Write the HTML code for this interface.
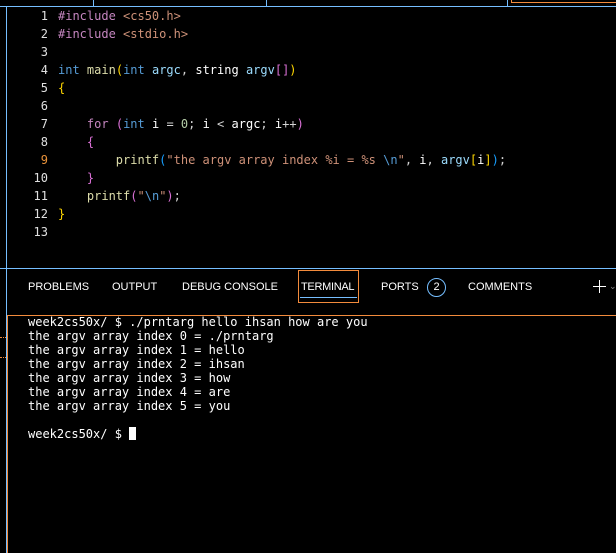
<!DOCTYPE html>
<html><head><meta charset="utf-8"><style>
html,body{margin:0;padding:0;background:#000;width:616px;height:553px;overflow:hidden;position:relative}
.abs{position:absolute}
.code{font-family:"DejaVu Sans Mono","Liberation Mono",monospace;font-size:12px;white-space:pre;color:#d4d4d4}
.ln{position:absolute;left:0;width:48px;text-align:right;color:#e0e0e0}
.cl{position:absolute;left:58px}
.k{color:#c586c0}.t{color:#569cd6}.s{color:#ce9178}.f{color:#dcdcaa}.v{color:#9cdcfe}.g{color:#ffd700}.p{color:#da70d6}.b{color:#179fff}.n{color:#b5cea8}.w{color:#fff}
.tab{position:absolute;top:281px;font-family:"Liberation Sans",sans-serif;font-size:11px;color:#fff}
.term{position:absolute;left:28px;top:315px;font-family:"DejaVu Sans Mono","Liberation Mono",monospace;font-size:12px;line-height:14px;color:#fff;white-space:pre}
</style></head><body>
<div class="abs" style="left:0;top:6px;width:616px;height:1px;background:#75beff"></div>
<div class="abs" style="left:93px;top:0;width:1px;height:6px;background:#75beff"></div>
<div class="abs" style="left:266px;top:0;width:1px;height:6px;background:#75beff"></div>
<div class="abs" style="left:507px;top:0;width:1px;height:6px;background:#75beff"></div>
<div class="abs" style="left:511px;top:0;width:105px;height:3px;border-left:1px solid #f38b3c;border-bottom:1px solid #f38b3c;box-sizing:border-box"></div>
<div class="abs" style="left:6px;top:6px;width:1px;height:547px;background:#75beff"></div>
<div class="abs" style="left:0;top:268px;width:616px;height:1px;background:#75beff"></div>
<div class="abs" style="left:7px;top:315px;width:609px;height:1px;background:#f38b3c"></div>
<div class="abs" style="left:7px;top:315px;width:1px;height:238px;background:#f38b3c"></div>
<div class="abs" style="left:0;top:337px;width:6px;height:21px;border-top:1px dotted #f38b3c;border-bottom:1px dotted #f38b3c;box-sizing:border-box"></div>

<div class="code">
<div class="ln" style="top:9px">1</div><div class="cl" style="top:9px"><span class="k">#include</span> <span class="s">&lt;cs50.h&gt;</span></div>
<div class="ln" style="top:27px">2</div><div class="cl" style="top:27px"><span class="k">#include</span> <span class="s">&lt;stdio.h&gt;</span></div>
<div class="ln" style="top:45px">3</div>
<div class="ln" style="top:63px">4</div><div class="cl" style="top:63px"><span class="t">int</span> <span class="f">main</span><span class="g">(</span><span class="t">int</span> <span class="v">argc</span>, <span class="w">string</span> <span class="v">argv</span><span class="p">[]</span><span class="g">)</span></div>
<div class="ln" style="top:81px">5</div><div class="cl" style="top:81px"><span class="g">{</span></div>
<div class="ln" style="top:99px">6</div>
<div class="ln" style="top:117px">7</div><div class="cl" style="top:117px">    <span class="k">for</span> <span class="p">(</span><span class="t">int</span> <span class="w">i</span> = <span class="n">0</span>; <span class="w">i</span> &lt; <span class="w">argc</span>; <span class="w">i</span>++<span class="p">)</span></div>
<div class="ln" style="top:135px">8</div><div class="cl" style="top:135px">    <span class="p">{</span></div>
<div class="ln" style="top:153px;color:#e8923a">9</div><div class="cl" style="top:153px">        <span class="f">printf</span><span class="b">(</span><span class="s">"the argv array index %i = %s </span><span class="t">\n</span><span class="s">"</span>, <span class="w">i</span>, <span class="v">argv</span><span class="g">[</span><span class="w">i</span><span class="g">]</span><span class="b">)</span>;</div>
<div class="ln" style="top:171px">10</div><div class="cl" style="top:171px">    <span class="p">}</span></div>
<div class="ln" style="top:189px">11</div><div class="cl" style="top:189px">    <span class="f">printf</span><span class="p">(</span><span class="s">"</span><span class="t">\n</span><span class="s">"</span><span class="p">)</span>;</div>
<div class="ln" style="top:207px">12</div><div class="cl" style="top:207px"><span class="g">}</span></div>
<div class="ln" style="top:225px">13</div>
</div>

<div class="tab" style="left:28px">PROBLEMS</div>
<div class="tab" style="left:112px">OUTPUT</div>
<div class="tab" style="left:182px">DEBUG CONSOLE</div>
<div class="abs" style="left:298px;top:270px;width:61px;height:33px;border:1px solid #f38b3c;box-sizing:border-box"></div>
<div class="abs" style="left:300px;top:297px;width:57px;height:1px;background:#75beff"></div>
<div class="tab" style="left:301px;letter-spacing:-0.3px">TERMINAL</div>
<div class="tab" style="left:381px">PORTS</div>
<div class="abs" style="left:427px;top:278px;width:19px;height:19px;border:1px solid #75beff;border-radius:50%;box-sizing:border-box;color:#fff;font:11px 'Liberation Sans',sans-serif;text-align:center;line-height:17px">2</div>
<div class="tab" style="left:468px">COMMENTS</div>
<div class="abs" style="left:593px;top:286px;width:13px;height:1px;background:#fff"></div>
<div class="abs" style="left:599px;top:280px;width:1px;height:13px;background:#fff"></div>
<div class="abs" style="left:609px;top:281px;color:#888;font:9px 'Liberation Sans',sans-serif">⌄</div>

<div class="term">week2cs50x/ $ ./prntarg hello ihsan how are you
the argv array index 0 = ./prntarg
the argv array index 1 = hello
the argv array index 2 = ihsan
the argv array index 3 = how
the argv array index 4 = are
the argv array index 5 = you

week2cs50x/ $ <span style="display:inline-block;width:7px;height:13px;background:#fff;vertical-align:-2px"></span></div>
</body></html>
